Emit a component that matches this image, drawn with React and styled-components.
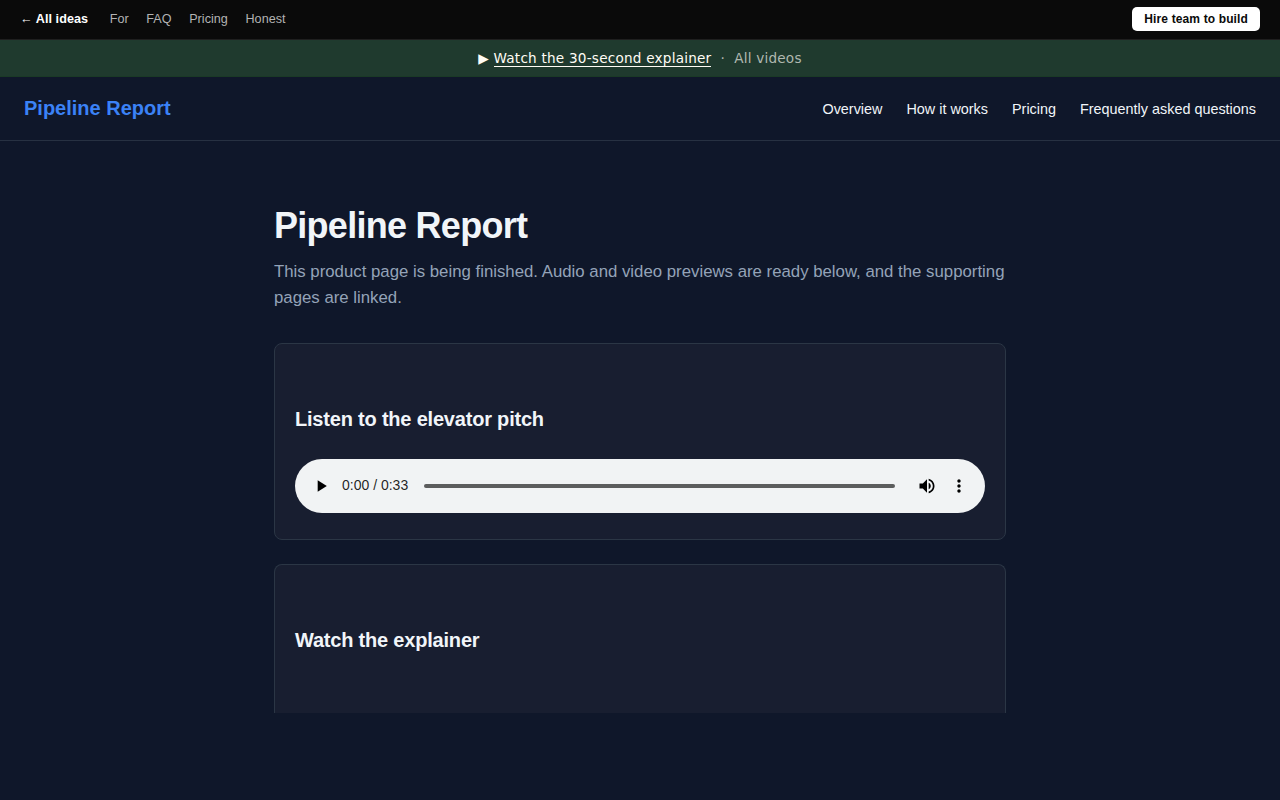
import styled, { createGlobalStyle } from "styled-components";

const GlobalStyle = createGlobalStyle`
  * {
    box-sizing: border-box;
  }

  body {
    margin: 0;
    background: #0f172a;
    color: #f1f5f9;
    font-family: "Liberation Sans", Arial, sans-serif;
    line-height: 1.6;
  }

  a {
    color: inherit;
    text-decoration: none;
  }
`;

const TopBar = styled.div`
  display: flex;
  align-items: center;
  justify-content: space-between;
  height: 40px;
  padding: 0 20px 2px;
  background: #0a0a0a;
  border-bottom: 1px solid #1f1f1f;
  font-size: 13px;
  line-height: 20px;
`;

const TopLinks = styled.nav`
  display: flex;
  align-items: center;
  gap: 17.6px;
`;

const TopLink = styled.a`
  color: ${props => props.$home ? '#fff' : '#b3b3b3'};
  font-weight: ${props => props.$home ? 600 : 400};
  font-size: 12.6px;
  letter-spacing: ${props => props.$home ? '0.06px' : '0.03px'};
  margin-right: ${props => props.$home ? '4px' : '0'};
`;

const HireButton = styled.a`
  padding: 2px 12px;
  border-radius: 5px;
  background: #fff;
  color: #0a0a0a;
  font-size: 12px;
  letter-spacing: 0.13px;
  font-weight: 700;
`;

const VideoBanner = styled.div`
  display: flex;
  align-items: center;
  justify-content: center;
  height: 37px;
  background: #1f3a2e;
  border-bottom: 1px solid #1a3a26;
  color: #fffdf5;
  font-family: "DejaVu Sans", sans-serif;
  font-size: 13.6px;
  letter-spacing: 0.22px;
  line-height: 20px;
  white-space: pre;
`;

const BannerLink = styled.a`
  padding-top: 2px;
  border-bottom: 1px solid #fffdf5;
  line-height: 15px;
`;

const BannerMuted = styled.span`
  color: #b0b8b0;
`;

const Header = styled.header`
  display: flex;
  align-items: center;
  justify-content: space-between;
  height: 64px;
  padding: 0 24px;
  border-bottom: 1px solid #273142;
`;

const Brand = styled.a`
  padding-bottom: 2px;
  color: #3b82f6;
  font-size: 20px;
  font-weight: 700;
`;

const HeaderNav = styled.nav`
  display: flex;
  gap: 24px;
  padding-top: 2px;
  font-size: 14.4px;
`;

const Main = styled.main`
  width: 732px;
  margin: 0 auto;
  padding-top: 61px;
`;

const Title = styled.h1`
  margin: 0;
  font-size: 36px;
  line-height: 48px;
  letter-spacing: -0.72px;
`;

const Lead = styled.p`
  margin: 9px 0 32px;
  color: #94a3b8;
  font-size: 16.8px;
  line-height: 26px;
`;

const Card = styled.section`
  height: ${props => props.$cut ? '149px' : '197px'};
  margin-bottom: 24px;
  padding: 59px 20px 0;
  background: #181e30;
  border: 1px solid #2b3645;
  border-radius: 8px;
  ${props => props.$cut && `
    border-bottom: none;
    border-radius: 8px 8px 0 0;
  `}
`;

const CardTitle = styled.h2`
  margin: 0 0 24px;
  font-size: 20px;
  line-height: 32px;
  letter-spacing: -0.2px;
`;

const Player = styled.div`
  display: flex;
  align-items: center;
  height: 54px;
  padding: 0 16px;
  border-radius: 27px;
  background: #f1f3f4;
  color: #000;
`;

const PlayerIcon = styled.svg`
  width: 20px;
  height: 20px;
  flex: none;
  fill: #000;
`;

const Time = styled.span`
  margin-left: 11px;
  color: rgba(0, 0, 0, 0.87);
  font-size: 14px;
  line-height: 20px;
  padding-bottom: 2px;
`;

const Track = styled.div`
  flex: 1;
  height: 4px;
  margin: 0 22px 0 16px;
  border-radius: 2px;
  background: #5c5d5d;
`;

const Controls = styled.div`
  display: flex;
  gap: 12px;
`;

const topLinks = ["For", "FAQ", "Pricing", "Honest"];
const navLinks = ["Overview", "How it works", "Pricing", "Frequently asked questions"];

function AudioPlayer() {
  return (
    <Player>
      <PlayerIcon viewBox="0 0 24 24">
        <path d="M8 5v14l11-7z" />
      </PlayerIcon>
      <Time>0:00 / 0:33</Time>
      <Track />
      <Controls>
        <PlayerIcon viewBox="0 0 24 24">
          <path d="M3 9v6h4l5 5V4L7 9H3zm13.5 3c0-1.77-1.02-3.29-2.5-4.03v8.05c1.48-.73 2.5-2.25 2.5-4.02zM14 3.23v2.06c2.89.86 5 3.54 5 6.71s-2.11 5.85-5 6.71v2.06c4.01-.91 7-4.49 7-8.77s-2.99-7.86-7-8.77z" />
        </PlayerIcon>
        <PlayerIcon viewBox="0 0 24 24">
          <path d="M12 8c1.1 0 2-.9 2-2s-.9-2-2-2-2 .9-2 2 .9 2 2 2zm0 2c-1.1 0-2 .9-2 2s.9 2 2 2 2-.9 2-2-.9-2-2-2zm0 6c-1.1 0-2 .9-2 2s.9 2 2 2 2-.9 2-2-.9-2-2-2z" />
        </PlayerIcon>
      </Controls>
    </Player>
  );
}

export default function App() {
  return (
    <>
      <GlobalStyle />
      <TopBar>
        <TopLinks>
          <TopLink $home href="#">← All ideas</TopLink>
          {topLinks.map((link) => (
            <TopLink key={link} href="#">{link}</TopLink>
          ))}
        </TopLinks>
        <HireButton href="#">Hire team to build</HireButton>
      </TopBar>

      <VideoBanner>
        <span>▶ </span>
        <BannerLink href="#">Watch the 30-second explainer</BannerLink>
        <BannerMuted>{"  ·  "}</BannerMuted>
        <BannerMuted as="a" href="#">All videos</BannerMuted>
      </VideoBanner>

      <Header>
        <Brand href="#">Pipeline Report</Brand>
        <HeaderNav>
          {navLinks.map((link) => (
            <a key={link} href="#">{link}</a>
          ))}
        </HeaderNav>
      </Header>

      <Main>
        <Title>Pipeline Report</Title>
        <Lead>
          This product page is being finished. Audio and video previews are ready below, and the supporting pages are linked.
        </Lead>
        <Card>
          <CardTitle>Listen to the elevator pitch</CardTitle>
          <AudioPlayer />
        </Card>
        <Card $cut>
          <CardTitle>Watch the explainer</CardTitle>
        </Card>
      </Main>
    </>
  );
}
